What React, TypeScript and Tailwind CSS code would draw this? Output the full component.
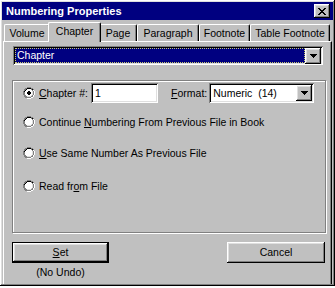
const raised =
  "shadow-[inset_-1px_-1px_0_#000,inset_1px_1px_0_#fff,inset_-2px_-2px_0_#808080,inset_2px_2px_0_#dfdfdf]";
const sunken =
  "shadow-[inset_1px_1px_0_#808080,inset_-1px_-1px_0_#fff,inset_2px_2px_0_#000,inset_-2px_-2px_0_#dfdfdf]";

const Radio = ({ checked }: { checked?: boolean }) => (
  <svg width="12" height="12" viewBox="0 0 12 12" className="shrink-0">
    <path d="M4 0h4v1h2v1h1v2h1v4h-1v2h-1v1H8v1H4v-1H2v-1H1V8H0V4h1V2h1V1h2z" fill="#808080" />
    <path d="M4 1h4v1h2v1h-1v-1H8v-0H4v1H3v1H2v1H1V4h1V3h1V2h1z" fill="#000" />
    <path d="M4 2h4v1h1v1h1v4h-1v1H8v1H4v-1H3V8H2V4h1V3h1z" fill="#fff" />
    <path d="M10 3h1v1h1v4h-1v2h-1v1H8v1H4v-1h4v-1h2V8h1V4h-1z" fill="#fff" />
    <path d="M9 4h1v4H9v1H8v1H4V9h4V8h1z" fill="#dfdfdf" />
    {checked && <path d="M5 4h2v1h1v2H7v1H5V7H4V5h1z" fill="#000" />}
  </svg>
);

const Arrow = () => (
  <div className={`w-[16px] h-[16px] bg-[#c0c0c0] flex items-center justify-center ${raised}`}>
    <svg width="7" height="4" viewBox="0 0 7 4">
      <path d="M0 0h7v1H6v1H5v1H4v1H3V3H2V2H1V1H0z" fill="#000" />
    </svg>
  </div>
);

const tabs = [
  { name: "Volume", w: "w-[46px]" },
  { name: "Chapter", w: "w-[53px]", active: true },
  { name: "Page", w: "w-[38px]" },
  { name: "Paragraph", w: "w-[62px]" },
  { name: "Footnote", w: "w-[51px]" },
  { name: "Table Footnote", w: "w-[80px]" },
];

export default function App() {
  return (
    <div
      className="w-[335px] h-[288px] bg-white text-[10.5px] text-black leading-none"
      style={{ fontFamily: '"Liberation Sans", Arial, sans-serif' }}
    >
      <div className={`h-[286px] bg-[#c0c0c0] p-[2px] flex flex-col ${raised}`}>
        {/* title bar */}
        <div className="h-[18px] bg-[#000080] flex items-center justify-between pl-[4px] pr-[3px]">
          <span className="text-white font-bold text-[11px]">Numbering Properties</span>
          <div className={`w-[16px] h-[14px] bg-[#c0c0c0] flex items-center justify-center ${raised}`}>
            <svg width="8" height="7" viewBox="0 0 8 7">
              <path d="M0 0h2v1h1v1h2V1h1V0h2v1H7v1H6v1H5v1h1v1h1v1h1v1H6V6H5V5H3v1H2v1H0V6h1V5h1V4h1V3H2V2H1V1H0z" fill="#000" />
            </svg>
          </div>
        </div>

        {/* tabs */}
        <div className="flex items-end h-[21px] pl-[2px]">
          {tabs.map((t) =>
            t.active ? (
              <div
                key={t.name}
                className={`${t.w} -mx-[2px] h-[20px] relative z-10 -mb-px bg-[#c0c0c0] border-l border-t border-white border-r border-r-black rounded-t-[2px] shadow-[inset_-1px_0_0_#808080] flex items-center justify-center pb-[2px]`}
              >
                {t.name}
              </div>
            ) : (
              <div
                key={t.name}
                className={`${t.w} h-[17px] border-l border-t border-white border-r border-r-black rounded-t-[2px] shadow-[inset_-1px_0_0_#808080] flex items-center justify-center`}
              >
                {t.name}
              </div>
            )
          )}
        </div>

        {/* panel */}
        <div className="flex-1 ml-[1px] mr-[1px] border-t border-l border-white border-r border-r-black shadow-[inset_-1px_0_0_#808080] pl-[8px] pt-[4px] flex flex-col">
          <div className={`ml-px w-[310px] h-[19px] bg-white flex items-center p-[2px] ${sunken}`}>
            <div className="flex-1 h-full bg-[#000080] text-white border border-dotted border-[#c8c870] flex items-center pl-[1px]">
              Chapter
            </div>
            <Arrow />
          </div>

          {/* group box */}
          <div className="mt-[15px] w-[314px] h-[153px] border border-[#808080] shadow-[inset_1px_1px_0_#fff,1px_1px_0_#fff] pl-[10px] pt-[2px] flex flex-col">
            <div className="flex items-center h-[20px]">
              <Radio checked />
              <span className="ml-[4px]">
                <u>C</u>hapter #:
              </span>
              <div className={`ml-[3px] w-[67px] h-[20px] bg-white flex items-center pl-[4px] ${sunken}`}>1</div>
              <span className="ml-[13px]">
                <u>F</u>ormat:
              </span>
              <div className={`ml-[2px] w-[105px] h-[20px] bg-white flex items-center p-[2px] ${sunken}`}>
                <span className="flex-1 pl-[2px]">Numeric&nbsp;&nbsp;(14)</span>
                <Arrow />
              </div>
            </div>
            <div className="flex items-center h-[16px] mt-[11px]">
              <Radio />
              <span className="ml-[4px]">
                Continue <u>N</u>umbering From Previous File in Book
              </span>
            </div>
            <div className="flex items-center h-[16px] mt-[15px]">
              <Radio />
              <span className="ml-[4px]">
                <u>U</u>se Same Number As Previous File
              </span>
            </div>
            <div className="flex items-center h-[16px] mt-[17px]">
              <Radio />
              <span className="ml-[4px]">
                Read fr<u>o</u>m File
              </span>
            </div>
          </div>

          {/* buttons */}
          <div className="mt-[9px] w-[314px] flex justify-between">
            <div className="flex flex-col items-center">
              <div className="w-[97px] h-[21px] border border-black">
                <div className={`w-full h-full flex items-center justify-center ${raised}`}>
                  <span>
                    <u>S</u>et
                  </span>
                </div>
              </div>
              <span className="mt-[4px]">(No Undo)</span>
            </div>
            <div className={`mr-[1px] w-[98px] h-[21px] flex items-center justify-center ${raised}`}>Cancel</div>
          </div>
        </div>
      </div>
    </div>
  );
}
